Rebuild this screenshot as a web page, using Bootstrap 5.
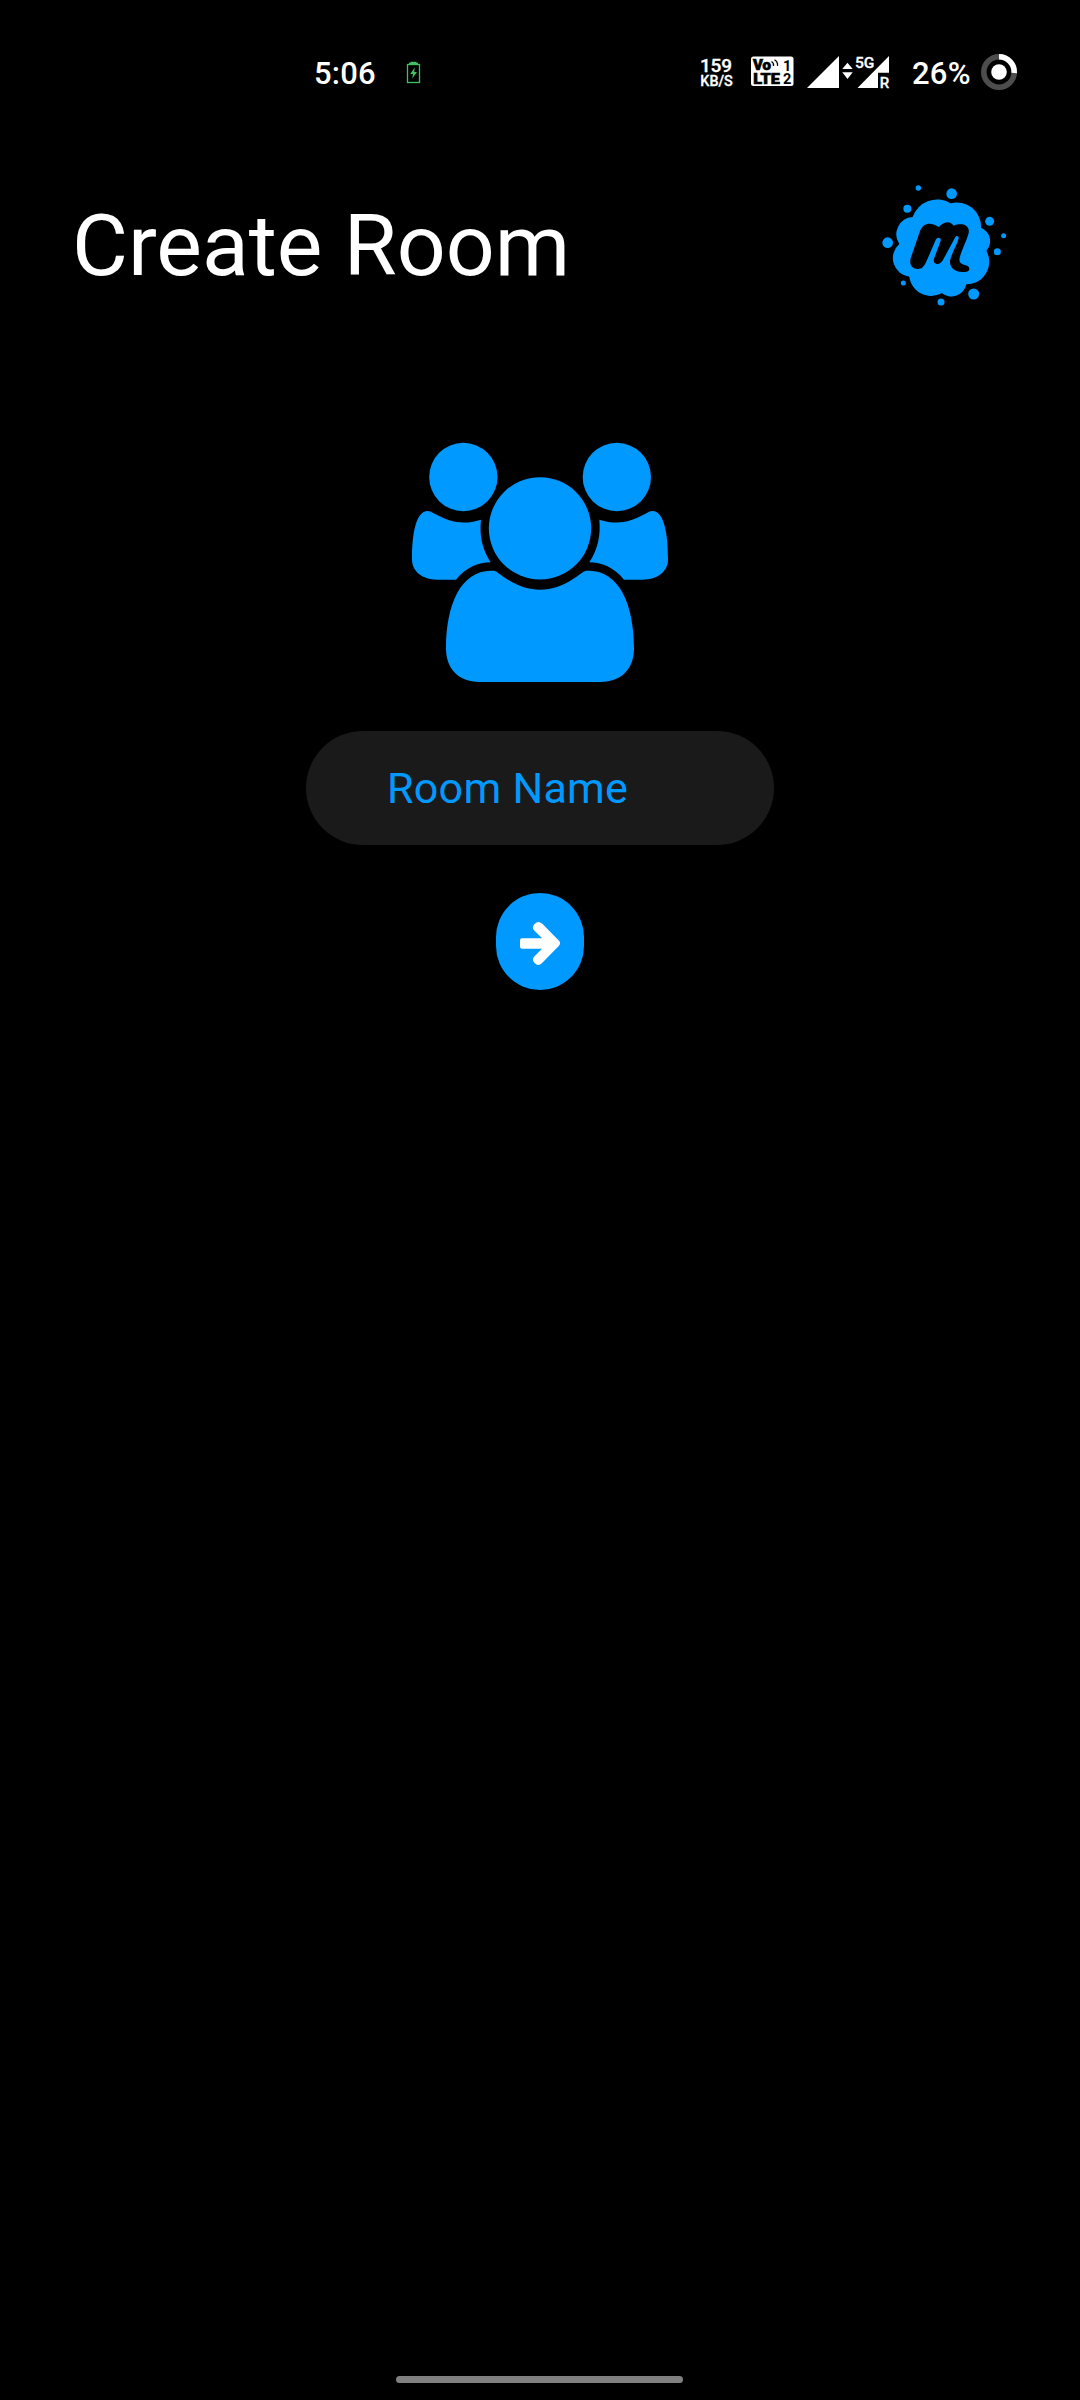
<!DOCTYPE html>
<html lang="en">
<head>
<meta charset="utf-8">
<meta name="viewport" content="width=device-width, initial-scale=1">
<title>Create Room</title>
<link href="https://cdn.jsdelivr.net/npm/bootstrap@5.3.0/dist/css/bootstrap.min.css" rel="stylesheet">
<style>
  :root { --accent: #0099ff; }
  body { background: #000; color: #fff; font-family: Roboto, "Liberation Sans", sans-serif; }
  svg { display: block; flex: none; }
  svg text { font-family: Roboto, sans-serif; }
  .screen { height: 2400px; }
  .status-bar { height: 145px; padding: 45px 50px 0 314px; }
  .status-text { font-size: 31px; font-weight: 500; line-height: 57px; letter-spacing: .2px; white-space: nowrap; }
  .clock-box { width: 86px; }
  .percent-box { width: 68px; padding-left: 2px; }
  .room-header { padding: 30px 60px 0 72px; }
  .room-title { font-size: 86px; font-weight: 400; line-height: 100px; margin: 2px 0 0; white-space: nowrap; }
  .people-icon { margin-top: 115px; }
  .room-input, .room-input:focus { width: 468px; height: 114px; margin-top: 31px; padding: 0 60px 0 81px; background: #1a1a1a; color: var(--accent); font-size: 43px; letter-spacing: .3px; }
  .room-input::placeholder { color: var(--accent); opacity: 1; }
  .go-btn, .go-btn:hover { width: 88px; height: 97px; margin-top: 48px; border-radius: 44px; background: var(--accent); }
  .home-bar { width: 287px; height: 7px; margin: auto 0 17px 396px; background: #808080; }
</style>
</head>
<body>
<div class="screen d-flex flex-column overflow-hidden">
  <div class="status-bar d-flex align-items-start">
    <div class="status-text clock-box">5:06</div>
    <svg width="40" height="55" viewBox="400 45 40 55" fill="none" stroke="#3fc35f">
      <rect x="407.5" y="64.5" width="12" height="18" stroke-width="1.3"/>
      <path d="M409 63.5h9M410.5 62.5h6" stroke-width="1.5"/>
      <path d="M414.8 67.5l-4.6 6.6h2.8l-.8 4.400 4.800-6.400h-2.800z" fill="#3fc35f" stroke="none"/>
    </svg>
    <svg class="ms-auto" width="110" height="55" viewBox="690 45 110 55" fill="#fff" font-weight="500">
      <text x="700" y="72" font-size="19" textLength="32" stroke="#fff" stroke-width=".3">159</text>
      <text x="700.3" y="86" font-size="14.5" textLength="32.500" lengthAdjust="spacingAndGlyphs" stroke="#fff" stroke-width=".3">KB/S</text>
      <rect x="751" y="56.5" width="42.5" height="29.5" rx="2.5"/>
      <g fill="#000" font-weight="900">
        <g stroke="#000" stroke-width=".7">
          <text x="753" y="70" font-size="14.5" textLength="18" lengthAdjust="spacingAndGlyphs">Vo</text>
          <text x="753.3" y="83.5" font-size="15" textLength="26.5" lengthAdjust="spacingAndGlyphs">LTE</text>
        </g>
        <text x="783" y="70.5" font-size="14.5" font-weight="700">1</text>
        <text x="783" y="83.5" font-size="14.5" font-weight="700">2</text>
      </g>
      <path d="M771.5 61.5q2.500 1.500 2 4.500M774.500 59.800q3.500 2 3 6" fill="none" stroke="#000" stroke-width="1.300"/>
    </svg>
    <svg width="110" height="55" viewBox="800 45 110 55" fill="#fff" font-weight="500">
      <path d="M807 88L839 56V88zM842.300 69l5.200-6.300 5.200 6.300zM842.300 72.300h10.400l-5.200 6.700z"/>
      <path d="M857.500 88L889 56V72.700H878V88z"/>
      <text x="855" y="68.200" font-size="15.500" textLength="19.500" lengthAdjust="spacingAndGlyphs" stroke="#fff" stroke-width=".3">5G</text>
      <text x="879.700" y="88" font-size="15.500" textLength="9.500" lengthAdjust="spacingAndGlyphs" stroke="#fff" stroke-width=".3">R</text>
    </svg>
    <div class="status-text percent-box">26%</div>
    <svg width="52" height="55" viewBox="978 45 52 55" fill="none">
      <circle cx="999" cy="72" r="15.200" stroke="#4d4d4d" stroke-width="5.600"/>
      <path d="M999 56.800A15.200 15.200 0 0 1 1014.200 73" stroke="#fff" stroke-width="5.600"/>
      <circle cx="999" cy="72" r="7.800" fill="#fff"/>
    </svg>
  </div>

  <header class="room-header d-flex justify-content-between align-items-center">
    <h1 class="room-title">Create Room</h1>
    <svg width="150" height="140" viewBox="0 0 450 420" fill="#0099ff">
      <path d="M128 126A77 77 0 0 1 242 85A72 72 0 0 1 333 158A43 43 0 0 1 349 227A68 68 0 0 1 289 328A46 46 0 0 1 215 354A65 65 0 0 1 118 305A56 56 0 0 1 88 207A52 52 0 0 1 128 126Z"/>
      <circle cx="145" cy="39" r="8"/><circle cx="245" cy="56" r="16"/><circle cx="112" cy="101" r="12"/>
      <circle cx="359" cy="139" r="13.500"/><circle cx="401" cy="182" r="7.500"/><circle cx="382" cy="230" r="10.500"/>
      <circle cx="53" cy="203" r="16"/><circle cx="100" cy="324" r="7.500"/><circle cx="213" cy="381" r="10.500"/><circle cx="311" cy="357" r="16.500"/>
      <path fill="#000" d="M122 250L150 168C156 152 166 146 180 146C192 147 199 151 207 156C213 149 222 142 232 142C241 142 246 147 251 152C260 148 268 147 276 148C290 150 299 160 296 174C292 192 274 228 269 248C266 262 272 267 282 269C293 271 298 275 298 281C298 289 289 291 277 291C254 291 238 277 240 258C243 240 262 207 266 190C267 183 259 180 255 188L222 249C216 262 209 268 200 267C190 265 189 256 194 246L212 197C214 188 203 184 198 193L168 262C161 278 152 283 143 282C127 282 117 270 122 250Z"/>
    </svg>
  </header>

  <main class="d-flex flex-column align-items-center">
    <svg class="people-icon" width="280" height="270" viewBox="0 0 840 810" fill="#0099ff">
      <circle cx="190" cy="141" r="102.500"/>
      <circle cx="650.500" cy="141" r="102.500"/>
      <circle cx="420" cy="295" r="153.500"/>
      <path d="M83 243C90 243 95 247 105 252C150 276 187 286 243 269C238 315 245 355 272 397C235 397 198 412 168 449H112C67 449 36 425 36 388C36 310 48 243 83 243Z"/>
      <path d="M757 243C750 243 745 247 735 252C690 276 653 286 598 269C602 315 595 355 568 397C605 397 642 412 672 449H728C773 449 804 425 804 388C804 310 792 243 757 243Z"/>
      <path d="M278 422C290 422 295 430 315 443C383 491 457 491 525 443C545 430 550 422 562 422C655 418 702 520 702 655C702 717 664 756 602 756H238C176 756 138 717 138 655C138 520 185 418 278 422Z"/>
    </svg>
    <input class="room-input form-control border-0 rounded-pill shadow-none" type="text" placeholder="Room Name" aria-label="Room Name">
    <button class="go-btn btn border-0 p-0 d-flex align-items-center justify-content-center" type="button" aria-label="Create room">
      <svg width="88" height="97" viewBox="48 39 264 291">
        <path fill="#fff" stroke="#fff" stroke-width="12" stroke-linejoin="round" d="M126 181H201L167 147Q162 142 168 136Q175 129 182 135L232 186Q236 190 232 194L182 245Q175 252 168 245Q162 239 167 234L201 200H126Z"/>
      </svg>
    </button>
  </main>

  <div class="home-bar rounded-pill"></div>
</div>
<script src="https://cdn.jsdelivr.net/npm/bootstrap@5.3.0/dist/js/bootstrap.bundle.min.js"></script>
</body>
</html>
